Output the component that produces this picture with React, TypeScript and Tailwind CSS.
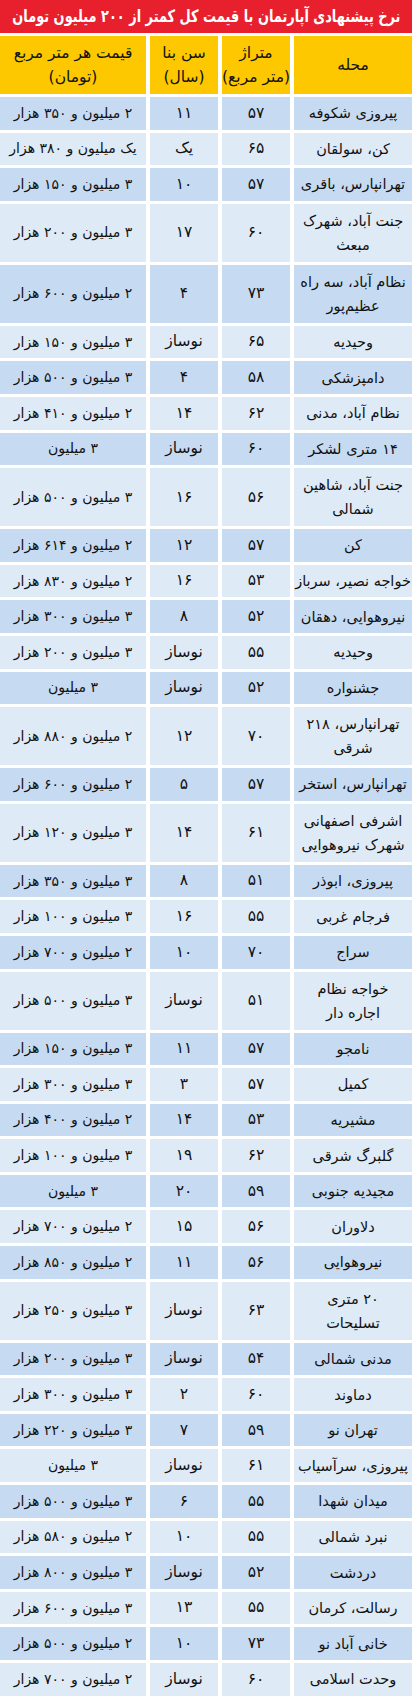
import React from "react";

type R = { n: string[]; a: string; y: string; p: string };

const rows: R[] = [
  { n: ["پیروزی شکوفه"], a: "۵۷", y: "۱۱", p: "۲ میلیون و ۳۵۰ هزار" },
  { n: ["کن، سولقان"], a: "۶۵", y: "یک", p: "یک میلیون و ۳۸۰ هزار" },
  { n: ["تهرانپارس، باقری"], a: "۵۷", y: "۱۰", p: "۳ میلیون و ۱۵۰ هزار" },
  { n: ["جنت آباد، شهرک", "مبعث"], a: "۶۰", y: "۱۷", p: "۳ میلیون و ۲۰۰ هزار" },
  { n: ["نظام آباد، سه راه", "عظیم‌پور"], a: "۷۳", y: "۴", p: "۲ میلیون و ۶۰۰ هزار" },
  { n: ["وحیدیه"], a: "۶۵", y: "نوساز", p: "۳ میلیون و ۱۵۰ هزار" },
  { n: ["دامپزشکی"], a: "۵۸", y: "۴", p: "۳ میلیون و ۵۰۰ هزار" },
  { n: ["نظام آباد، مدنی"], a: "۶۲", y: "۱۴", p: "۲ میلیون و ۴۱۰ هزار" },
  { n: ["۱۴ متری لشکر"], a: "۶۰", y: "نوساز", p: "۳ میلیون" },
  { n: ["جنت آباد، شاهین", "شمالی"], a: "۵۶", y: "۱۶", p: "۳ میلیون و ۵۰۰ هزار" },
  { n: ["کن"], a: "۵۷", y: "۱۲", p: "۲ میلیون و ۶۱۴ هزار" },
  { n: ["خواجه نصیر، سرباز"], a: "۵۳", y: "۱۶", p: "۲ میلیون و ۸۳۰ هزار" },
  { n: ["نیروهوایی، دهقان"], a: "۵۲", y: "۸", p: "۳ میلیون و ۳۰۰ هزار" },
  { n: ["وحیدیه"], a: "۵۵", y: "نوساز", p: "۳ میلیون و ۲۰۰ هزار" },
  { n: ["جشنواره"], a: "۵۲", y: "نوساز", p: "۳ میلیون" },
  { n: ["تهرانپارس، ۲۱۸", "شرقی"], a: "۷۰", y: "۱۲", p: "۲ میلیون و ۸۸۰ هزار" },
  { n: ["تهرانپارس، استخر"], a: "۵۷", y: "۵", p: "۲ میلیون و ۶۰۰ هزار" },
  { n: ["اشرفی اصفهانی", "شهرک نیروهوایی"], a: "۶۱", y: "۱۴", p: "۳ میلیون و ۱۲۰ هزار" },
  { n: ["پیروزی، ابوذر"], a: "۵۱", y: "۸", p: "۳ میلیون و ۳۵۰ هزار" },
  { n: ["فرجام غربی"], a: "۵۵", y: "۱۶", p: "۳ میلیون و ۱۰۰ هزار" },
  { n: ["سراج"], a: "۷۰", y: "۱۰", p: "۲ میلیون و ۷۰۰ هزار" },
  { n: ["خواجه نظام", "اجاره دار"], a: "۵۱", y: "نوساز", p: "۳ میلیون و ۵۰۰ هزار" },
  { n: ["نامجو"], a: "۵۷", y: "۱۱", p: "۳ میلیون و ۱۵۰ هزار" },
  { n: ["کمیل"], a: "۵۷", y: "۳", p: "۳ میلیون و ۳۰۰ هزار" },
  { n: ["مشیریه"], a: "۵۳", y: "۱۴", p: "۲ میلیون و ۴۰۰ هزار" },
  { n: ["گلبرگ شرقی"], a: "۶۲", y: "۱۹", p: "۳ میلیون و ۱۰۰ هزار" },
  { n: ["مجیدیه جنوبی"], a: "۵۹", y: "۲۰", p: "۳ میلیون" },
  { n: ["دلاوران"], a: "۵۶", y: "۱۵", p: "۲ میلیون و ۷۰۰ هزار" },
  { n: ["نیروهوایی"], a: "۵۶", y: "۱۱", p: "۲ میلیون و ۸۵۰ هزار" },
  { n: ["۲۰ متری", "تسلیحات"], a: "۶۳", y: "نوساز", p: "۳ میلیون و ۲۵۰ هزار" },
  { n: ["مدنی شمالی"], a: "۵۴", y: "نوساز", p: "۳ میلیون و ۲۰۰ هزار" },
  { n: ["دماوند"], a: "۶۰", y: "۲", p: "۳ میلیون و ۳۰۰ هزار" },
  { n: ["تهران نو"], a: "۵۹", y: "۷", p: "۳ میلیون و ۲۲۰ هزار" },
  { n: ["پیروزی، سرآسیاب"], a: "۶۱", y: "نوساز", p: "۳ میلیون" },
  { n: ["میدان شهدا"], a: "۵۵", y: "۶", p: "۳ میلیون و ۵۰۰ هزار" },
  { n: ["نبرد شمالی"], a: "۵۵", y: "۱۰", p: "۲ میلیون و ۵۸۰ هزار" },
  { n: ["دردشت"], a: "۵۲", y: "نوساز", p: "۳ میلیون و ۸۰۰ هزار" },
  { n: ["رسالت، کرمان"], a: "۵۵", y: "۱۳", p: "۳ میلیون و ۶۰۰ هزار" },
  { n: ["خانی آباد نو"], a: "۷۳", y: "۱۰", p: "۲ میلیون و ۵۰۰ هزار" },
  { n: ["وحدت اسلامی"], a: "۶۰", y: "نوساز", p: "۲ میلیون و ۷۰۰ هزار" },
];

const font = { fontFamily: '"DejaVu Sans", sans-serif' };

function Row({ r, i }: { r: R; i: number }) {
  const dbl = r.n.length > 1;
  const bg = i % 2 === 0 ? "bg-[#c6dbf1]" : "bg-[#deeaf6]";
  const h = dbl ? "h-[58px]" : "h-[32.6px]";
  const cell = `${bg} ${h} flex items-center justify-center text-center text-[#111] whitespace-nowrap`;
  return (
    <div className="grid grid-cols-[118px_68px_68px_146px] gap-x-[4px]">
      <div className={`${cell} flex-col text-[14.5px] leading-[24px]`}>
        {r.n.map((t, k) => (
          <span key={k}>{t}</span>
        ))}
      </div>
      <div className={`${cell} text-[15.5px]`}>{r.a}</div>
      <div className={`${cell} text-[15.5px]`}>{r.y}</div>
      <div className={`${cell} text-[14px]`}>{r.p}</div>
    </div>
  );
}

export default function App() {
  return (
    <div dir="rtl" className="w-[412px] h-[1700px] overflow-hidden bg-white" style={font}>
      <div className="h-[33px] bg-[#e8202e] flex items-center justify-center overflow-hidden">
        <span className="inline-block text-white font-bold text-[17px] whitespace-nowrap scale-x-[0.76]">
          نرخ پیشنهادی آپارتمان با قیمت کل کمتر از ۲۰۰ میلیون تومان
        </span>
      </div>
      <div className="mt-[3px] grid grid-cols-[118px_68px_68px_146px] gap-x-[4px] h-[58px] text-[15.5px] text-[#111] leading-[24px]">
        <div className="bg-[#fdc800] flex items-center justify-center">محله</div>
        <div className="bg-[#fdc800] flex flex-col items-center justify-center whitespace-nowrap">
          <span>متراژ</span>
          <span>(متر مربع)</span>
        </div>
        <div className="bg-[#fdc800] flex flex-col items-center justify-center whitespace-nowrap">
          <span>سن بنا</span>
          <span>(سال)</span>
        </div>
        <div className="bg-[#fdc800] flex flex-col items-center justify-center whitespace-nowrap">
          <span>قیمت هر متر مربع</span>
          <span>(تومان)</span>
        </div>
      </div>
      <div className="mt-[3px] flex flex-col gap-y-[3px]">
        {rows.map((r, i) => (
          <Row key={i} r={r} i={i} />
        ))}
      </div>
    </div>
  );
}
